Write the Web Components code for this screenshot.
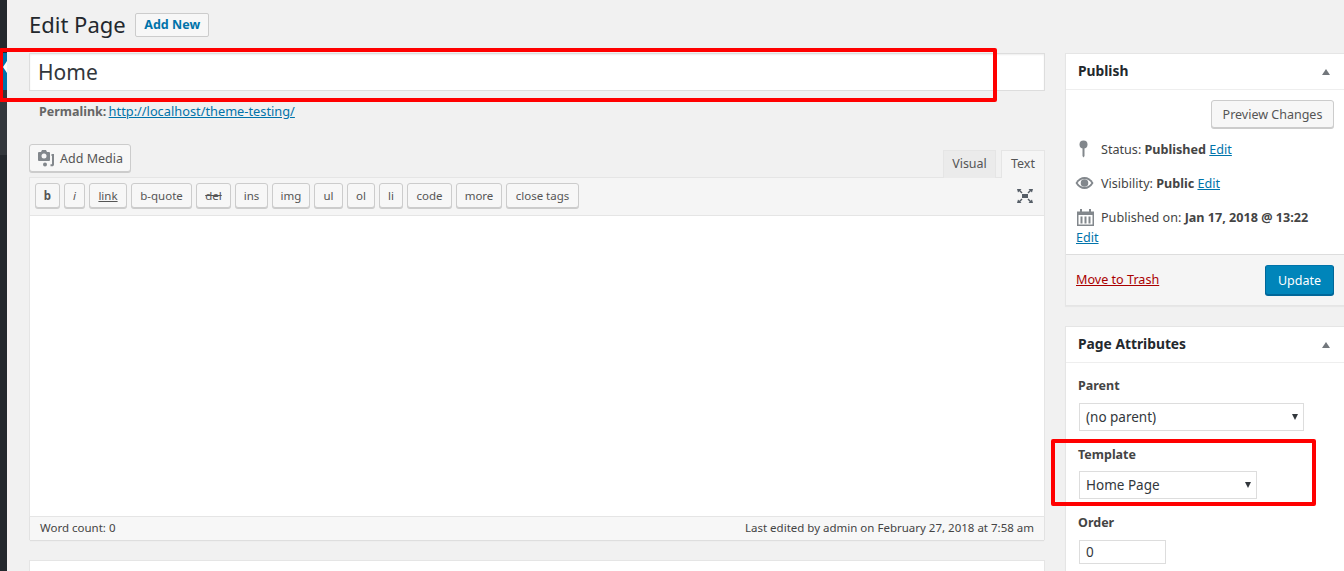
<!DOCTYPE html>
<html>
<head>
<meta charset="utf-8">
<title>Edit Page</title>
<style>
  html, body { margin: 0; padding: 0; height: 571px; overflow: hidden; background: #f1f1f1; }
  body { font-family: "Noto Sans", "Open Sans", sans-serif; font-size: 13px; color: #444; }
</style>
</head>
<body>
<wp-admin></wp-admin>

<script>
const FONT = '"Noto Sans", "Open Sans", sans-serif';

class WpSidebar extends HTMLElement {
    constructor() {
        super();
        this.attachShadow({ mode: 'open' });
    }
    connectedCallback() {
        this.shadowRoot.innerHTML = `
        <style>
          :host { display: flex; flex-direction: column; width: 7px; flex: none; height: 571px; background: #23282d; }
          .top { height: 53px; }
          .cur { height: 37px; background: #0073aa; display: flex; align-items: center; justify-content: flex-end; padding-bottom: 10px; box-sizing: border-box; }
          .notch { width: 0; height: 0; border: 6px solid transparent; border-right: 4px solid #fff; border-left: 0; }
          .sub { height: 65px; background: #32373c; }
        </style>
        <div class="top"></div>
        <div class="cur"><div class="notch"></div></div>
        <div class="sub"></div>
        `;
    }
}

class WpButton extends HTMLElement {
    constructor() {
        super();
        this.attachShadow({ mode: 'open' });
    }
    connectedCallback() {
        this.shadowRoot.innerHTML = `
        <style>
          :host { display: inline-flex; align-items: center; justify-content: center; box-sizing: border-box; flex: none;
            height: 28px; border: 1px solid #ccc; border-radius: 3px; background: #f7f7f7; box-shadow: 0 1px 0 #ccc;
            color: #555; font-family: ${FONT}; font-size: 12.5px; white-space: nowrap; }
          :host([primary]) { background: #0085ba; border-color: #0073aa #006799 #006799; box-shadow: 0 1px 0 #006799; color: #fff; }
          :host([flat]) { box-shadow: none; color: #0073aa; font-weight: 700; height: 24px; padding-left: 1px; border-radius: 2px; }
        </style>
        <slot></slot>
        `;
    }
}

class WpToolbar extends HTMLElement {
    constructor() {
        super();
        this.attachShadow({ mode: 'open' });
    }
    connectedCallback() {
        const buttons = [
            ['b', 25, 'font-weight:700'], ['i', 21, 'font-style:italic'], ['link', 38, 'text-decoration:underline'],
            ['b-quote', 61], ['del', 35, 'text-decoration:line-through'], ['ins', 33], ['img', 38], ['ul', 29],
            ['ol', 28], ['li', 24], ['code', 45], ['more', 46], ['close tags', 73]
        ];
        const html = buttons.map(([label, w, extra]) =>
            `<wp-button style="width:${w}px;height:25px;padding-bottom:1px;font-size:11.5px;${extra || ''}">${label}</wp-button>`).join('');
        this.shadowRoot.innerHTML = `
        <style>
          :host { display: flex; align-items: flex-start; justify-content: space-between; box-sizing: border-box;
            height: 38px; padding: 5px 11px 0 5px; background: #f5f5f5; border-bottom: 1px solid #e5e5e5; }
          .btns { display: flex; gap: 4px; }
          svg { display: block; margin-top: 6px; }
        </style>
        <div class="btns">${html}</div>
        <svg width="16" height="14" viewBox="0 0 16 14" fill="#555d66">
          <rect x="5" y="5" width="6" height="4"/>
          <path d="M0 0h4.500L3.300 1.200 5.500 3.400 4.500 4.400 2.300 2.200 1 3.500z"/>
          <path d="M16 0h-4.500l1.200 1.200-2.200 2.200 1 1 2.200-2.200L15 3.500z"/>
          <path d="M0 14h4.500l-1.200-1.200 2.200-2.200-1-1-2.200 2.200L1 10.500z"/>
          <path d="M16 14h-4.500l1.200-1.200-2.200-2.200 1-1 2.200 2.200 1.300-1.300z"/>
        </svg>
        `;
    }
}

class WpEditor extends HTMLElement {
    constructor() {
        super();
        this.attachShadow({ mode: 'open' });
    }
    connectedCallback() {
        this.shadowRoot.innerHTML = `
        <style>
          :host { display: block; font-family: ${FONT}; }
          .tools { display: flex; justify-content: space-between; align-items: flex-start; height: 34px; margin-bottom: -1px; position: relative; z-index: 1; }
          .tabs { display: flex; gap: 5px; margin-right: 0; padding-top: 6px; }
          .tab { box-sizing: border-box; height: 28px; padding-bottom: 2px; border: 1px solid #e5e5e5; border-bottom: 0; background: #ebebeb; color: #555;
            display: flex; align-items: center; justify-content: center; font-size: 12.5px; }
          .tab.on { background: #f5f5f5; }
          .wrap { border: 1px solid #e5e5e5; border-bottom: 0; background: #fff; box-sizing: border-box; }
          .area { height: 300px; background: #fff; }
          .status { display: flex; justify-content: space-between; align-items: center; box-sizing: border-box; height: 24px; padding: 0 10px 2px;
            background: #f7f7f7; border-top: 1px solid #e5e5e5; box-shadow: 0 1px 1px rgba(0,0,0,.08); font-size: 11.5px; color: #444; }
        </style>
        <div class="tools">
          <wp-button style="width:102px;gap:5px">
            <svg width="18" height="18" viewBox="0 0 18 18" fill="#82878c">
              <path d="M1 4a1 1 0 0 1 1-1h2l1-2h4l1 2h2a1 1 0 0 1 1 1v7a1 1 0 0 1-1 1H2a1 1 0 0 1-1-1z"/>
              <circle cx="7" cy="7" r="2.500" fill="#f7f7f7"/>
              <path d="M14.500 5H17v10.500c0 1-.8 1.800-1.800 1.800H13.500v-2h1.500V7h-.500z"/>
              <circle cx="8" cy="15.500" r="2"/>
            </svg>Add Media
          </wp-button>
          <div class="tabs">
            <div class="tab" style="width:53px">Visual</div>
            <div class="tab on" style="width:44px">Text</div>
          </div>
        </div>
        <div class="wrap">
          <wp-toolbar></wp-toolbar>
          <div class="area"></div>
          <div class="status"><span>Word count: 0</span><span>Last edited by admin on February 27, 2018 at 7:58 am</span></div>
        </div>
        `;
    }
}

class WpPostbox extends HTMLElement {
    constructor() {
        super();
        this.attachShadow({ mode: 'open' });
    }
    connectedCallback() {
        this.shadowRoot.innerHTML = `
        <style>
          :host { display: block; background: #fff; border: 1px solid #e5e5e5; box-shadow: 0 1px 1px rgba(0,0,0,.04); font-family: ${FONT}; }
          .head { display: flex; align-items: center; justify-content: space-between; box-sizing: border-box; height: 36px;
            padding: 0 14px 2px 12px; border-bottom: 1px solid #eee; font-size: 13.800px; font-weight: 700; color: #23282d; }
          .tri { width: 0; height: 0; border-left: 4px solid transparent; border-right: 4px solid transparent; border-bottom: 6px solid #72777c; margin-top: 3px; }
        </style>
        <div class="head"><span>${this.getAttribute('title')}</span><span class="tri"></span></div>
        <slot></slot>
        `;
    }
}

class WpSelect extends HTMLElement {
    constructor() {
        super();
        this.attachShadow({ mode: 'open' });
    }
    connectedCallback() {
        this.shadowRoot.innerHTML = `
        <style>
          :host { display: flex; align-items: center; justify-content: space-between; box-sizing: border-box; height: 28px; padding: 0 7px 0 6px;
            background: #fff; border: 1px solid #ddd; font-family: ${FONT}; font-size: 13.500px; color: #32373c; }
          i { width: 0; height: 0; border-left: 3.500px solid transparent; border-right: 3.500px solid transparent; border-top: 6px solid #32373c; margin-right: -2px; }
        </style>
        <span><slot></slot></span><i></i>
        `;
    }
}

class WpPublish extends HTMLElement {
    constructor() {
        super();
        this.attachShadow({ mode: 'open' });
    }
    connectedCallback() {
        this.shadowRoot.innerHTML = `
        <style>
          :host { display: block; font-size: 12.600px; color: #444; }
          a { color: #0073aa; text-decoration: underline; }
          .prev { display: flex; justify-content: flex-end; padding: 10px 10px 0 0; }
          .rows { padding: 12px 0 0 10px; box-sizing: border-box; height: 126px; }
          .row { display: flex; align-items: center; height: 18px; margin-bottom: 16px; white-space: nowrap; }
          .ico { width: 25px; display: flex; flex: none; }
          .row.date { margin-bottom: 3px; }
          .foot { display: flex; justify-content: space-between; align-items: center; box-sizing: border-box; height: 51px; padding: 0 10px;
            background: #f5f5f5; border-top: 1px solid #ddd; }
          .trash { color: #a00; margin-bottom: 2px; }
        </style>
        <div class="prev"><wp-button style="width:123px">Preview Changes</wp-button></div>
        <div class="rows">
          <div class="row"><span class="ico"><svg width="14" height="18" viewBox="0 0 14 18" fill="#82878c" style="margin-left:2px"><circle cx="5.500" cy="4.500" r="4"/><path d="M4.500 7h2v9l-1 1.500-1-1.500z"/></svg></span><span>Status: <b>Published</b> <a>Edit</a></span></div>
          <div class="row"><span class="ico"><svg width="19" height="14" viewBox="0 0 19 14" style="margin-left:-1px"><path d="M.5 7C3 2.800 6 1 9.500 1s6.500 1.800 9 6c-2.500 4.200-5.500 6-9 6s-6.500-1.800-9-6z" fill="#82878c"/><path d="M2.600 7C4.600 4.200 6.800 3 9.500 3s4.900 1.200 6.900 4c-2 2.800-4.200 4-6.900 4S4.600 9.800 2.600 7z" fill="#fff"/><circle cx="9.500" cy="7" r="3.800" fill="#82878c"/></svg></span><span>Visibility: <b>Public</b> <a>Edit</a></span></div>
          <div class="row date"><span class="ico"><svg width="17" height="17" viewBox="0 0 17 17" fill="#82878c" style="margin-left:1px"><path d="M0 2.500h3V0h2v2.500h7V0h2v2.500h3V17H0zM1.500 6v9.500h14V6z"/><path d="M3.500 7.500h2v7h-2zM7.500 7.500h2v7h-2zM11.500 7.500h2v7h-2z"/></svg></span><span>Published on: <b>Jan 17, 2018 @ 13:22</b></span></div>
          <div><a>Edit</a></div>
        </div>
        <div class="foot"><a class="trash">Move to Trash</a><wp-button primary style="width:69px;height:30px">Update</wp-button></div>
        `;
    }
}

class WpAttributes extends HTMLElement {
    constructor() {
        super();
        this.attachShadow({ mode: 'open' });
    }
    connectedCallback() {
        this.shadowRoot.innerHTML = `
        <style>
          :host { display: block; padding: 14px 0 0 12px; height: 220px; box-sizing: border-box; font-size: 12.500px; color: #444; }
          .lab { font-weight: 700; height: 17px; line-height: 17px; margin-bottom: 9px; }
          wp-select { margin: 0 0 15px 1px; }
          .num { box-sizing: border-box; width: 87px; height: 24px; margin-left: 1px; padding: 0 6px; line-height: 22px; border: 1px solid #ddd; background: #fff; color: #32373c; font-size: 13.500px; }
        </style>
        <div class="lab">Parent</div>
        <wp-select style="width:225px">(no parent)</wp-select>
        <div class="lab" style="margin-bottom:8px">Template</div>
        <wp-select style="width:178px">Home Page</wp-select>
        <div class="lab" style="margin-bottom:9px">Order</div>
        <div class="num">0</div>
        `;
    }
}

class WpAdmin extends HTMLElement {
    constructor() {
        super();
        this.attachShadow({ mode: 'open' });
    }
    connectedCallback() {
        this.shadowRoot.innerHTML = `
        <style>
          :host { display: flex; position: relative; width: 1344px; height: 571px; overflow: hidden; font-family: ${FONT}; }
          .content { flex: none; width: 1337px; padding: 0 0 0 22px; box-sizing: border-box; display: flex; gap: 20px; }
          .main { flex: none; width: 1016px; }
          .side { flex: none; width: 280px; padding-top: 53px; }
          .heading { display: flex; align-items: center; gap: 9px; height: 53px; padding-bottom: 4px; box-sizing: border-box; }
          h1 { margin: 0; font-size: 22px; font-weight: 400; color: #23282d; line-height: 29px; }
          .title { box-sizing: border-box; height: 38px; border: 1px solid #ddd; background: #fff; padding: 0 8px; line-height: 36px;
            font-size: 21px; color: #32373c; box-shadow: inset 0 1px 2px rgba(0,0,0,.07); }
          .perma { height: 53px; padding: 11px 0 0 10px; box-sizing: border-box; font-size: 12.500px; color: #666; }
          .perma a { color: #0073aa; text-decoration: underline; font-size: 12.800px; margin-left: -1px; }
          .next { height: 30px; margin-top: 20px; background: #fff; border: 1px solid #e5e5e5; }
          .gap { height: 20px; }
          .mark { position: absolute; box-sizing: border-box; border: 4.500px solid #f00; border-radius: 2px; pointer-events: none; }
        </style>
        <wp-sidebar></wp-sidebar>
        <div class="content">
          <div class="main">
            <div class="heading"><h1>Edit Page</h1><wp-button flat style="width:74px">Add New</wp-button></div>
            <div class="title">Home</div>
            <div class="perma"><b>Permalink:</b> <a>http://localhost/theme-testing/</a></div>
            <wp-editor></wp-editor>
            <div class="next"></div>
          </div>
          <div class="side">
            <wp-postbox title="Publish"><wp-publish></wp-publish></wp-postbox>
            <div class="gap"></div>
            <wp-postbox title="Page Attributes"><wp-attributes></wp-attributes></wp-postbox>
          </div>
        </div>
        <div class="mark" style="left:-1.500px;top:48px;width:998.500px;height:54px"></div>
        <div class="mark" style="left:1051px;top:439px;width:265px;height:67px"></div>
        `;
    }
}

customElements.define('wp-sidebar', WpSidebar);
customElements.define('wp-button', WpButton);
customElements.define('wp-toolbar', WpToolbar);
customElements.define('wp-editor', WpEditor);
customElements.define('wp-postbox', WpPostbox);
customElements.define('wp-select', WpSelect);
customElements.define('wp-publish', WpPublish);
customElements.define('wp-attributes', WpAttributes);
customElements.define('wp-admin', WpAdmin);
</script>
</body>
</html>
